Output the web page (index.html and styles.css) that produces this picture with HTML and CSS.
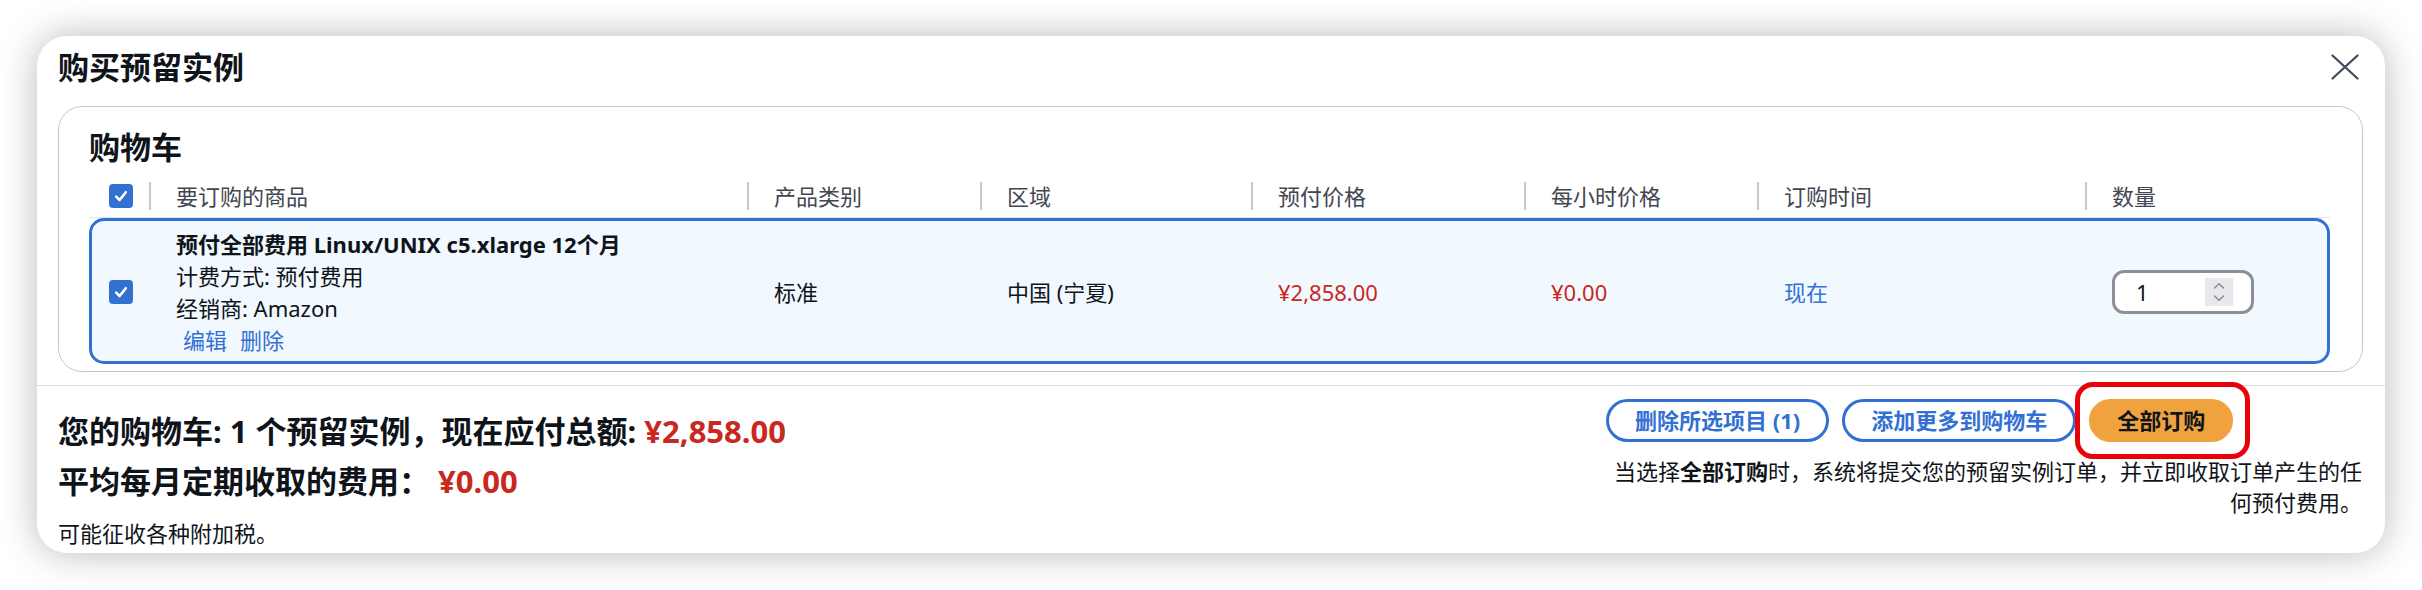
FILE: index.html
```html
<!DOCTYPE html>
<html lang="zh-CN">
<head>
<meta charset="utf-8">
<title>购买预留实例</title>
<link rel="stylesheet" href="styles.css">
</head>
<body>
<div class="modal">
  <div class="modal-header">
    <h2 class="modal-title">购买预留实例</h2>
    <button class="close-btn" aria-label="关闭">
      <svg width="28" height="26" viewBox="0 0 28 26"><path d="M1.5 1.5 L26.5 24.5 M26.5 1.5 L1.5 24.5" stroke="#414d5c" stroke-width="2.3" stroke-linecap="round" fill="none"/></svg>
    </button>
  </div>

  <div class="cart">
    <h3 class="cart-title">购物车</h3>
    <div class="thead">
      <div class="th th-check"><span class="cb"><svg width="16" height="16" viewBox="0 0 16 16"><path d="M3.2 8.6 L6.6 12 L12.8 4.2" stroke="#fff" stroke-width="2.6" fill="none" stroke-linecap="round" stroke-linejoin="round"/></svg></span></div>
      <div class="th">要订购的商品</div>
      <div class="th">产品类别</div>
      <div class="th">区域</div>
      <div class="th">预付价格</div>
      <div class="th">每小时价格</div>
      <div class="th">订购时间</div>
      <div class="th">数量</div>
    </div>
    <div class="trow">
      <div class="td td-check"><span class="cb"><svg width="16" height="16" viewBox="0 0 16 16"><path d="M3.2 8.6 L6.6 12 L12.8 4.2" stroke="#fff" stroke-width="2.6" fill="none" stroke-linecap="round" stroke-linejoin="round"/></svg></span></div>
      <div class="td item">
        <div class="item-name">预付全部费用 Linux/UNIX c5.xlarge 12个月</div>
        <div>计费方式: 预付费用</div>
        <div>经销商: Amazon</div>
        <div class="item-actions"><a class="link">编辑</a><a class="link">删除</a></div>
      </div>
      <div class="td">标准</div>
      <div class="td">中国 (宁夏)</div>
      <div class="td price">¥2,858.00</div>
      <div class="td price">¥0.00</div>
      <div class="td"><a class="link">现在</a></div>
      <div class="td">
        <div class="num-input">
          <span class="num-val">1</span>
          <span class="spinner"><svg width="28" height="28" viewBox="0 0 28 28"><path d="M9.5 10 L14 5.8 L18.5 10 M9.5 18 L14 22.2 L18.5 18" stroke="#8a8b92" stroke-width="1.5" fill="none" stroke-linecap="round" stroke-linejoin="round"/></svg></span>
        </div>
      </div>
    </div>
  </div>

  <div class="modal-footer">
    <div class="summary">
      <p class="sum-line">您的购物车: 1 个预留实例，现在应付总额: <span class="red">¥2,858.00</span></p>
      <p class="sum-line second">平均每月定期收取的费用： <span class="red">¥0.00</span></p>
      <p class="tax">可能征收各种附加税。</p>
    </div>
    <div class="actions">
      <div class="btn-row">
        <button class="btn">删除所选项目 (1)</button>
        <button class="btn">添加更多到购物车</button>
        <span class="hl-wrap"><button class="btn primary">全部订购</button><span class="highlight"></span></span>
      </div>
      <p class="desc">当选择<b>全部订购</b>时，系统将提交您的预留实例订单，并立即收取订单产生的任何预付费用。</p>
    </div>
  </div>
</div>
</body>
</html>
```

FILE: styles.css
```css
* { box-sizing: border-box; }

html, body {
  margin: 0;
  padding: 0;
  background: #ffffff;
}

body {
  width: 2422px;
  height: 590px;
  overflow: hidden;
  font-family: "Noto Sans", "Noto Sans CJK SC", sans-serif;
  color: #0f141a;
}

.modal {
  margin: 36px 0 0 37px;
  width: 2348px;
  height: 517px;
  background: #ffffff;
  border-radius: 30px;
  box-shadow: 0 0 38px rgba(0, 0, 0, 0.28);
  overflow: hidden;
}

/* header */
.modal-header {
  display: flex;
  align-items: center;
  justify-content: space-between;
  padding: 11px 22px 0 21px;
}

.modal-title {
  margin: 0;
  font-size: 31px;
  line-height: 40px;
  font-weight: 700;
}

.close-btn {
  display: flex;
  border: 0;
  background: none;
  padding: 0;
  margin-right: 4px;
  width: 28px;
  height: 26px;
}

/* cart container */
.cart {
  margin: 19px 22px 13px 21px;
  border: 1px solid #c6c6cd;
  border-radius: 24px;
  padding: 20px 32px 7px 30px;
}

.cart-title {
  margin: 0;
  font-size: 31px;
  line-height: 40px;
  font-weight: 700;
}

.thead,
.trow {
  display: grid;
  grid-template-columns: 57px 598px 233px 271px 273px 233px 328px 242px;
}

.thead {
  padding: 15px 3px 7px;
  border-bottom: 1px solid #e4e4e8;
}

.th {
  border-left: 2px solid #c6c6cd;
  padding-left: 25px;
  font-size: 22px;
  line-height: 28px;
  color: #424650;
}

.th-check {
  border-left: 0;
  padding-left: 17px;
  display: flex;
  align-items: center;
}

.cb {
  display: flex;
  align-items: center;
  justify-content: center;
  width: 24px;
  height: 24px;
  border-radius: 4px;
  background: #3370d4;
}

.trow {
  align-items: center;
  border: 3px solid #3370d4;
  border-radius: 15px;
  background: #f1f8fe;
  padding: 7px 0 5px;
  font-size: 22px;
  line-height: 32px;
}

.td {
  padding-left: 27px;
}

.td-check {
  padding-left: 17px;
  display: flex;
}

.item-name {
  font-weight: 700;
}

.item-actions {
  display: flex;
  gap: 13px;
  padding-left: 7px;
}

.link {
  color: #3371d4;
  text-decoration: none;
}

.price {
  color: #c8281e;
}

.num-input {
  display: flex;
  align-items: center;
  justify-content: space-between;
  width: 142px;
  height: 44px;
  border: 3px solid #8c8f97;
  border-radius: 12px;
  background: #ffffff;
  padding: 0 18px 0 21px;
}

.num-val {
  font-size: 22px;
  line-height: 28px;
  color: #0f141a;
}

.spinner {
  display: flex;
  width: 28px;
  height: 28px;
  background: #e9e9ed;
}

/* footer */
.modal-footer {
  border-top: 1px solid #dadade;
  display: flex;
  justify-content: space-between;
  align-items: flex-start;
  padding: 13px 23px 0 21px;
}

.summary {
  padding-top: 12px;
}

.sum-line {
  margin: 0;
  font-size: 31px;
  line-height: 40px;
  font-weight: 700;
}

.sum-line.second {
  margin-top: 10px;
}

.red {
  color: #c8281e;
}

.tax {
  margin: 16px 0 0;
  font-size: 22px;
  line-height: 32px;
}

.actions {
  width: 756px;
}

.btn-row {
  display: flex;
  gap: 13px;
}

.btn {
  font-family: inherit;
  font-size: 22px;
  font-weight: 700;
  line-height: 27px;
  padding: 5px 26px;
  border: 3px solid #3370d4;
  border-radius: 22px;
  background: #ffffff;
  color: #3370d4;
}

.btn.primary {
  background: #f0a23e;
  border-color: #f0a23e;
  color: #0f141a;
  padding: 5px 25px;
}

.hl-wrap {
  position: relative;
  display: inline-flex;
}

.highlight {
  position: absolute;
  left: -14px;
  top: -17px;
  right: -17px;
  bottom: -17px;
  border: 5px solid #e8000b;
  border-radius: 18px;
  pointer-events: none;
}

.desc {
  margin: 14px 0 0;
  text-align: right;
  font-size: 22px;
  line-height: 31px;
}

.desc b {
  font-weight: 700;
}
```
